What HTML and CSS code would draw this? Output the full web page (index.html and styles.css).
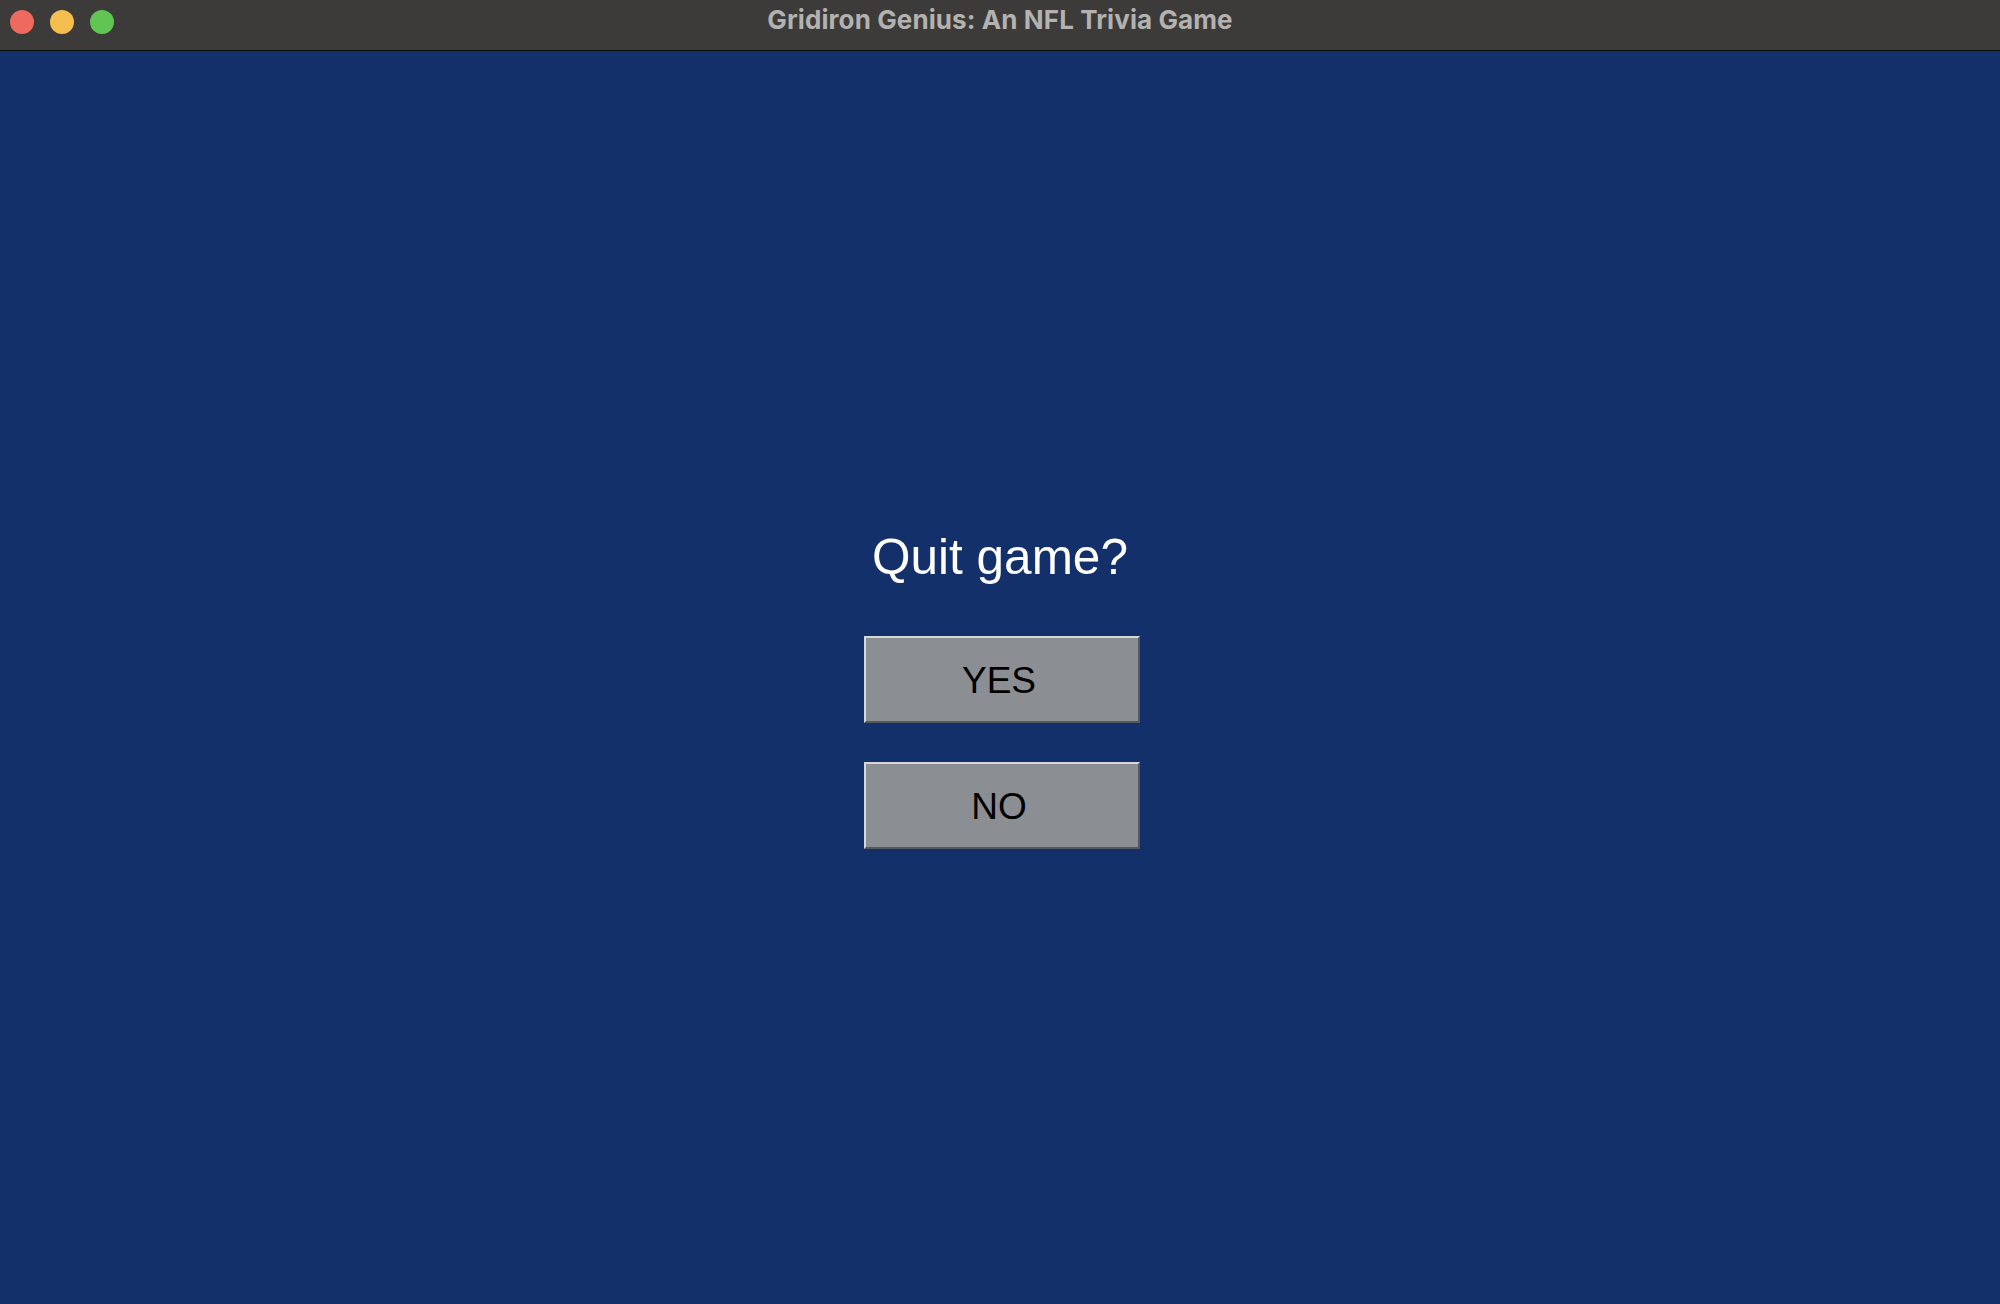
FILE: index.html
```html
<!DOCTYPE html>
<html>
<head>
<meta charset="utf-8">
<link rel="stylesheet" href="styles.css">
</head>
<body>
<div class="window">
  <header class="titlebar">
    <div class="lights">
      <span class="light red"></span>
      <span class="light yellow"></span>
      <span class="light green"></span>
    </div>
    <div class="title">Gridiron Genius: An NFL Trivia Game</div>
  </header>
  <main class="content">
    <h1 class="question">Quit game?</h1>
    <div class="buttons">
      <button class="btn">YES</button>
      <button class="btn">NO</button>
    </div>
  </main>
</div>
</body>
</html>
```

FILE: styles.css
```css
html, body {
  margin: 0;
  padding: 0;
  width: 2000px;
  height: 1304px;
  overflow: hidden;
  background: #13306a;
}
.window {
  display: flex;
  flex-direction: column;
  height: 1304px;
}
.titlebar {
  height: 50px;
  border-bottom: 1px solid #0a0a0a;
  background: #3c3b39;
  display: flex;
  align-items: flex-start;
  position: relative;
}
.lights {
  display: flex;
  gap: 16px;
  padding-left: 10px;
  position: absolute;
  left: 0;
  top: 10px;
}
.light {
  width: 24px;
  height: 24px;
  border-radius: 50%;
  display: block;
}
.red { background: #ee6a5f; }
.yellow { background: #f5bf4f; }
.green { background: #61c554; }
.title {
  flex: 1;
  text-align: center;
  font-family: Inter, Roboto, "Liberation Sans", sans-serif;
  font-weight: 700;
  font-size: 26px;
  letter-spacing: 0.1px;
  color: #b3b2b0;
  line-height: 40px;
}
.content {
  flex: 1;
  display: flex;
  flex-direction: column;
  align-items: center;
  padding-top: 478px;
  background: #13306a;
}
.question {
  margin: 0;
  font-family: "Liberation Sans", Arial, sans-serif;
  font-weight: 400;
  font-size: 49.5px;
  line-height: 56px;
  color: #ffffff;
}
.buttons {
  display: flex;
  flex-direction: column;
  gap: 39px;
  margin-top: 51px;
  margin-left: 4px;
}
.btn {
  box-sizing: border-box;
  width: 276px;
  height: 87px;
  background: #8b8f93;
  border-style: solid;
  border-width: 2px;
  border-color: #d6d7d9 #55595d #55595d #d6d7d9;
  font-family: "Liberation Sans", Arial, sans-serif;
  font-size: 37px;
  color: #000000;
  padding: 2px 6px 0 0;
}
```
